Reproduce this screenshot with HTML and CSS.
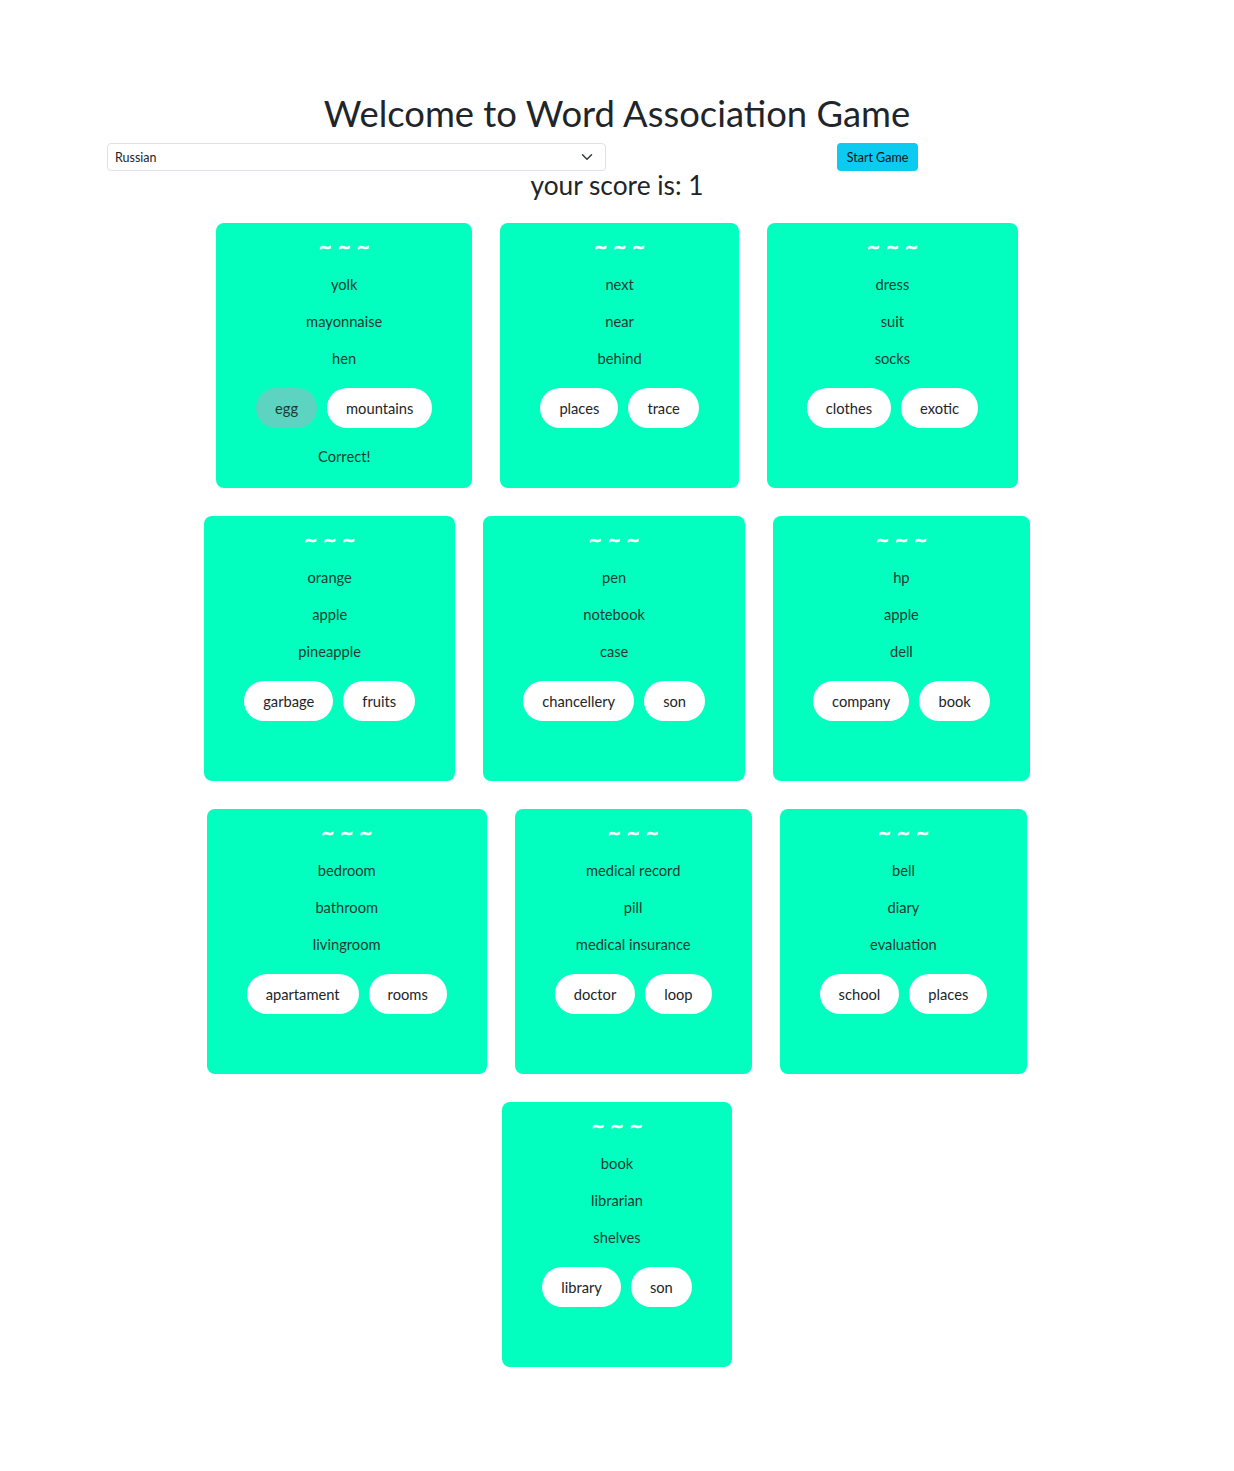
FILE: index.html
```html
<!DOCTYPE html>
<html lang="en">
<head>
<meta charset="utf-8">
<title>Word Association Game</title>
<link rel="stylesheet" href="styles.css">
</head>
<body>
<main class="page">
  <h1 class="title">Welcome to Word Association Game</h1>
  <div class="controls">
    <div class="select-wrap">
      <select class="lang-select">
        <option>Russian</option>
      </select>
      <svg class="chevron" viewBox="0 0 16 16" width="12" height="12"><path d="M2 5l6 6 6-6" fill="none" stroke="#343a40" stroke-width="2" stroke-linecap="round" stroke-linejoin="round"/></svg>
    </div>
    <button class="start-btn">Start Game</button>
  </div>
  <h4 class="score">your score is: 1</h4>

  <section class="cards">
    <div class="card">
      <p class="tilde">~ ~ ~</p>
      <p>yolk</p><p>mayonnaise</p><p>hen</p>
      <div class="choices"><button class="choice selected">egg</button><button class="choice">mountains</button></div>
      <p class="result">Correct!</p>
    </div>
    <div class="card">
      <p class="tilde">~ ~ ~</p>
      <p>next</p><p>near</p><p>behind</p>
      <div class="choices"><button class="choice">places</button><button class="choice">trace</button></div>
    </div>
    <div class="card">
      <p class="tilde">~ ~ ~</p>
      <p>dress</p><p>suit</p><p>socks</p>
      <div class="choices"><button class="choice">clothes</button><button class="choice">exotic</button></div>
    </div>
    <div class="card">
      <p class="tilde">~ ~ ~</p>
      <p>orange</p><p>apple</p><p>pineapple</p>
      <div class="choices"><button class="choice">garbage</button><button class="choice">fruits</button></div>
    </div>
    <div class="card">
      <p class="tilde">~ ~ ~</p>
      <p>pen</p><p>notebook</p><p>case</p>
      <div class="choices"><button class="choice">chancellery</button><button class="choice">son</button></div>
    </div>
    <div class="card">
      <p class="tilde">~ ~ ~</p>
      <p>hp</p><p>apple</p><p>dell</p>
      <div class="choices"><button class="choice">company</button><button class="choice">book</button></div>
    </div>
    <div class="card">
      <p class="tilde">~ ~ ~</p>
      <p>bedroom</p><p>bathroom</p><p>livingroom</p>
      <div class="choices"><button class="choice">apartament</button><button class="choice">rooms</button></div>
    </div>
    <div class="card">
      <p class="tilde">~ ~ ~</p>
      <p>medical record</p><p>pill</p><p>medical insurance</p>
      <div class="choices"><button class="choice">doctor</button><button class="choice">loop</button></div>
    </div>
    <div class="card">
      <p class="tilde">~ ~ ~</p>
      <p>bell</p><p>diary</p><p>evaluation</p>
      <div class="choices"><button class="choice">school</button><button class="choice">places</button></div>
    </div>
    <div class="card">
      <p class="tilde">~ ~ ~</p>
      <p>book</p><p>librarian</p><p>shelves</p>
      <div class="choices"><button class="choice">library</button><button class="choice">son</button></div>
    </div>
  </section>
</main>
</body>
</html>
```
FILE: styles.css
```css
* { box-sizing: border-box; }

body {
  margin: 0;
  background: #ffffff;
  color: #212529;
  font-family: Lato, "Open Sans", sans-serif;
  font-size: 14.7px;
  line-height: 1.5;
}

.page {
  padding-top: 89px;
  padding-bottom: 80px;
}

.title {
  margin: 0 0 6px;
  text-align: center;
  font-size: 36.4px;
  font-weight: 400;
  line-height: 48px;
  color: #212529;
}

.controls {
  width: 1020px;
  margin: 0 auto;
  display: flex;
  align-items: center;
}

.select-wrap {
  position: relative;
  width: 499px;
}

.lang-select {
  appearance: none;
  -webkit-appearance: none;
  width: 100%;
  height: 28px;
  padding: 0 30px 0 7px;
  border: 1px solid #dee2e6;
  border-radius: 4px;
  background: #fff;
  font-family: Lato, sans-serif;
  font-size: 12.5px;
  color: #212529;
}

.chevron {
  position: absolute;
  right: 13px;
  top: 8px;
  pointer-events: none;
}

.start-btn {
  margin-left: 231px;
  height: 28px;
  width: 81px;
  padding: 0;
  border: none;
  border-radius: 4px;
  background: #0dcaf0;
  color: #111;
  font-family: Lato, sans-serif;
  font-size: 12.5px;
}

.score {
  margin: 0 0 9px;
  text-align: center;
  font-size: 26.3px;
  font-weight: 400;
  line-height: 29px;
}

.cards {
  max-width: 880px;
  margin: 0 auto;
  display: flex;
  flex-wrap: wrap;
  justify-content: center;
}

.card {
  margin: 14px;
  height: 265px;
  padding: 14px 40px 0;
  background: #03ffc0;
  border-radius: 8px;
  text-align: center;
}

.card p {
  margin: 0 0 16px;
  line-height: 21px;
  color: #1c3a30;
}

.card .tilde {
  color: #ffffff;
  font-family: "DejaVu Sans", sans-serif;
  font-weight: 700;
  font-size: 16px;
  line-height: 21px;
  -webkit-text-stroke: 0.7px #ffffff;
}

.choices {
  display: flex;
  justify-content: center;
  gap: 10px;
  margin: 19px 0 17.5px;
}

.choice {
  height: 40px;
  padding: 0 19px;
  border: none;
  border-radius: 20px;
  background: #ffffff;
  color: #212529;
  font-family: Lato, sans-serif;
  font-size: 14.7px;
}

.choice.selected {
  background: #5dd3c2;
  color: #1c3a30;
}

.card .result {
  margin: 0;
}
```
